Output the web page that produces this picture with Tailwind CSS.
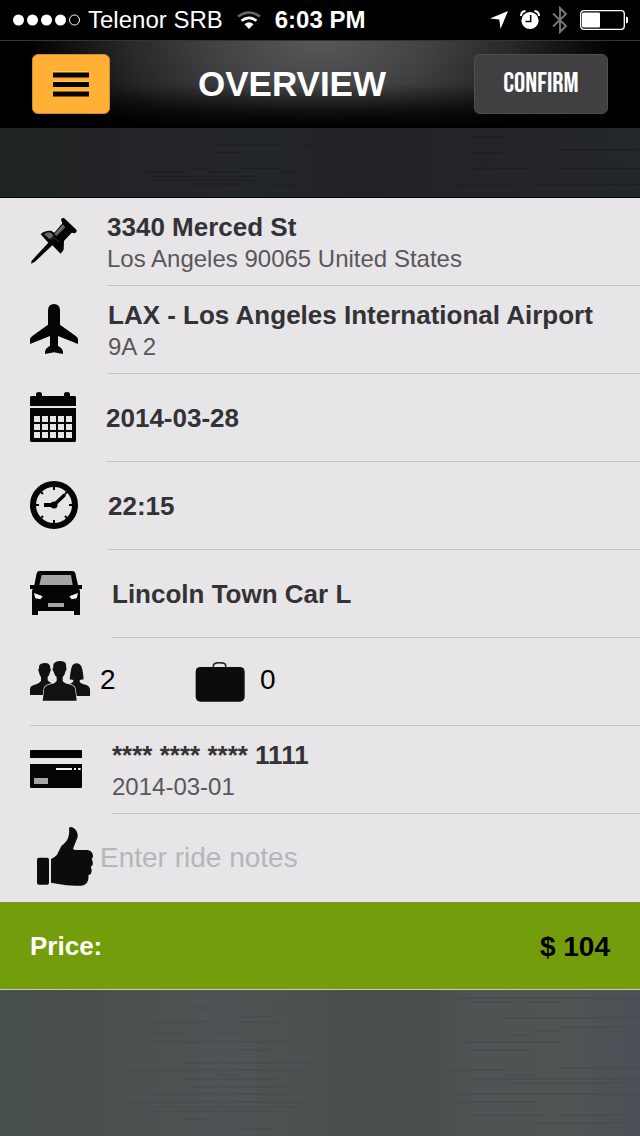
<!DOCTYPE html>
<html lang="en">
<head>
<meta charset="utf-8">
<meta name="viewport" content="width=device-width, initial-scale=1">
<title>Overview</title>
<script src="https://cdn.jsdelivr.net/npm/@tailwindcss/browser@4"></script>
</head>
<body class="min-h-screen flex flex-col bg-[linear-gradient(90deg,#465150_0%,#4a4d4e_8%,#4c5051_20%,#4e5455_35%,#4d5152_46%,#4a4d4e_56%,#4a4d4e_66%,#4e5354_74%,#4f5455_90%,#4d4f57_100%)] font-['Liberation_Sans',sans-serif] text-[#333235]">

<!-- Status bar -->
<div class="h-10 bg-black text-white flex items-center justify-between pl-3 pr-3 text-2xl">
  <div class="flex items-center">
    <svg class="w-[68px] h-3 mr-2" viewBox="0 0 68 12" fill="#fff"><circle cx="6.500" cy="6" r="5.500"/><circle cx="20.500" cy="6" r="5.500"/><circle cx="34.500" cy="6" r="5.500"/><circle cx="48.500" cy="6" r="5.500"/><circle cx="62.500" cy="6" r="5" fill="none" stroke="#fff"/></svg>
    <span>Telenor SRB</span>
    <svg class="w-6 h-[18px] mx-[14px]" viewBox="0 0 24 18" fill="none" stroke-width="2.600"><path d="M1 5.500Q12-2.500 23 5.500" stroke="#666"/><path d="M4.500 9.800Q12 4 19.500 9.800" stroke="#fff"/><path d="M12 18L7.500 13.200Q12 9.500 16.500 13.200Z" fill="#fff"/></svg>
    <span class="font-bold">6:03 PM</span>
  </div>
  <div class="flex items-center gap-3">
    <svg class="w-[18px] h-[18px]" viewBox="0 0 18 18" fill="#fff"><path d="M18 0L10.500 18 9.300 8.600 0 7.500Z"/></svg>
    <svg class="w-5 h-5" viewBox="0 0 20 20"><circle cx="10" cy="10.500" r="8.600" fill="#fff"/><path d="M1 6Q1 1.500 5.500 1M19 6Q19 1.500 14.500 1" fill="none" stroke="#fff" stroke-width="2"/><path d="M10.700 5V11.500H5.500" fill="none" stroke="#000" stroke-width="1.500"/></svg>
    <svg class="w-4 h-7" viewBox="0 0 16 28" fill="none" stroke="#77767a" stroke-width="1.900"><path d="M1 7.500L14 20 8 26V2L14 8 1 20.500"/></svg>
    <svg class="w-12 h-5" viewBox="0 0 48 20"><rect x=".7" y=".7" width="43.600" height="18.600" rx="3" fill="none" stroke="#fff" stroke-width="1.300"/><rect x="2" y="2.500" width="18" height="15" rx="1" fill="#fff"/><path d="M46 6.500Q48.500 7 48.500 10T46 13.500Z" fill="#fff"/></svg>
  </div>
</div>

<!-- Title bar -->
<header class="h-[88px] border-t border-[#343436] px-8 pb-0.5 flex items-center justify-between bg-black bg-[linear-gradient(180deg,transparent_50%,rgba(0,0,0,0.8)_85%,#000_100%),radial-gradient(ellipse_46%_170%_at_50%_0%,#58575a_0%,#434245_35%,#28272a_65%,#000_100%)]">
  <button type="button" aria-label="Menu" class="w-[78px] h-[60px] rounded-md bg-[#ffb035] border border-[#d08b2c] flex items-center justify-center">
    <svg class="w-9 h-7" viewBox="0 0 36 28"><path d="M0 2H36M0 12H36M0 21.500H36" stroke="#ffd04a" stroke-width="2"/><path d="M0 5H36M0 14.500H36M0 24H36" stroke="#0a0502" stroke-width="5"/></svg>
  </button>
  <h1 class="text-white font-bold text-[35px] leading-10">OVERVIEW</h1>
  <button type="button" class="w-[134px] h-[60px] rounded-md bg-[#403f42] border border-[#4e4d50] text-white text-[28px] font-['Bebas_Neue','Liberation_Sans_Narrow','Liberation_Sans',sans-serif]">CONFIRM</button>
</header>

<!-- Dark strip -->
<div class="h-[70px] border-b border-black bg-[linear-gradient(90deg,#1e2423_0%,#222326_15%,#232629_40%,#202225_57%,#222427_72%,#24272a_100%)]">
  <svg class="w-full h-full" viewBox="0 0 640 70" preserveAspectRatio="none" stroke="#1c1e21"><path d="M216 17H280M302 17H312M216 25H240M146 45H190M208 45H240M280 45H296M152 49H256M152 53H256M192 57H240M272 57H296M192 41H208M240 41H280M472 41H528M560 41H640M456 57H512M536 57H640M472 25H504M472 9H504M560 22H640"/></svg>
</div>

<!-- Ride details -->
<main class="bg-[#e7e5e8]">
  <div class="h-[88px] pl-[30px] flex gap-[30px] items-center">
    <svg class="w-[47px] h-12 mb-[3px] shrink-0" viewBox="90 52 141 144"><path d="M183 60Q184 54 192 55L230 91Q231 98 224 101L215 99 192 124 191 150 182 162 157 137 104 187 93 192 95 183 145 129 122 104Q132 92 153 93L163 99 187 71Z" fill="#050405"/><path d="M132 103Q143 95 153 99L161 108 149 119ZM188 74L196 83 169 109 163 103Z" fill="#69686b"/><path d="M153 121L160 114 179 127" fill="none" stroke="#555" stroke-width="2"/></svg>
    <div class="flex-1 h-full border-b border-[#c5c3c7] flex flex-col justify-center pt-[3px]">
      <div class="text-[26px] leading-[31px] font-bold">3340 Merced St</div>
      <div class="text-2xl leading-[31px] text-[#58575a]">Los Angeles 90065 United States</div>
    </div>
  </div>

  <div class="h-[88px] pl-[30px] flex gap-[30px] items-center">
    <svg class="w-12 h-[50px] mb-[3px] shrink-0" viewBox="90 312 144 150" fill="#050405"><path d="M144 330Q145 312 162 312T180 330V374L226 407Q234 412 234 418V432L174 408V437Q188 445 189 455V462L162 457 135 462V455Q136 445 150 437V408L90 432V418Q90 412 98 407L144 374Z"/></svg>
    <div class="flex-1 h-full border-b border-[#c5c3c7] flex flex-col justify-center pt-[3px]">
      <div class="text-[26px] leading-[31px] font-bold">LAX - Los Angeles International Airport</div>
      <div class="text-2xl leading-[31px] text-[#58575a]">9A 2</div>
    </div>
  </div>

  <div class="h-[88px] pl-[30px] flex gap-[30px] items-center">
    <svg class="w-[46px] h-[50px] mb-[3px] shrink-0" viewBox="0 0 46 50" fill="#050405"><path d="M1 4H6V2Q6 0 9 0T12 2V4H34V2Q34 0 37 0T40 2V4H45L46 5V14H0V5Z"/><path fill-rule="evenodd" d="M0 16H46V49L45 50H1L0 49ZM4 24V30H10V24ZM12 24V30H18V24ZM20 24V30H26V24ZM28 24V30H34V24ZM36 24V30H42V24ZM4 32V38H10V32ZM12 32V38H18V32ZM20 32V38H26V32ZM28 32V38H34V32ZM36 32V38H42V32ZM4 40V46H10V40ZM12 40V46H18V40ZM20 40V46H26V40ZM28 40V46H34V40ZM36 40V46H42V40Z"/></svg>
    <div class="flex-1 h-full border-b border-[#c5c3c7] flex items-center pt-0.5 text-[26px] font-bold">2014-03-28</div>
  </div>

  <div class="h-[88px] pl-[30px] flex gap-[30px] items-center">
    <svg class="w-12 h-12 mb-[3px] shrink-0" viewBox="0 0 48 48" fill="none" stroke="#050405"><circle cx="24" cy="24" r="21" stroke-width="6"/><path d="M24 6V9M24 39V42M6 24H9M39 24H42M11.300 11.300L13 13M35 13L36.700 11.300M11.300 36.700L13 35M35 35L36.700 36.700" stroke-width="2"/><path d="M14 24H24" stroke-width="4"/><path d="M24 24L34 14.500" stroke-width="3.500" stroke-linecap="round"/><circle cx="24" cy="24" r="3.500" fill="#050405" stroke="none"/></svg>
    <div class="flex-1 h-full border-b border-[#c5c3c7] flex items-center pt-0.5 text-[26px] font-bold">22:15</div>
  </div>

  <div class="h-[88px] pl-[30px] flex gap-[30px] items-center">
    <svg class="w-[52px] h-11 mb-[3px] shrink-0" viewBox="90 90 156 132"><path d="M119 90H217Q224 90 226 97L234 132H246V144H238L240 151V222H222V210H114V222H96V151L98 144H90V132H103L110 97Q112 90 119 90Z" fill="#050405"/><path d="M125 102H213L218 132H118Z" fill="#a5a4a7"/><path d="M102 156L128 166 121 175 106 172ZM234 156L208 166 215 175 230 172Z" fill="#f6f5f7"/><path d="M144 186H192V198H144Z" fill="#a5a4a7"/></svg>
    <div class="flex-1 h-full border-b border-[#c5c3c7] flex items-center pt-0.5 text-[26px] font-bold">Lincoln Town Car L</div>
  </div>

  <div class="h-[88px] pl-[30px]">
    <div class="h-full border-b border-[#c5c3c7] flex items-center text-[28px] text-black">
      <div class="w-[165px] flex items-center gap-[10px]">
        <svg class="w-[60px] h-10 mb-0.5" viewBox="90 363 180 120" fill="#111013"><path d="M117 385Q115 370 133 369T151 385Q155 389 150 397 148 407 143 411V421Q147 427 158 431L174 438V465H90V447Q91 437 104 434 119 429 123 422V411Q118 405 117 397 112 390 117 385Z"/><path d="M209 418Q213 374 221 373 229 367 239 373 248 378 251 418L239 420V425Q242 431 257 434 269 438 270 448V468H200V435Q217 430 220 424V420Z"/><path d="M160 382Q157 364 179 363T198 382Q202 386 196 395 194 407 188 411V422Q190 428 204 432 223 436 225 445L230 482H128L133 445Q137 435 155 432 168 428 170 422V411Q163 405 161 395 155 388 160 382Z" stroke="#e7e5e8" stroke-width="4" paint-order="stroke"/></svg>
        <span class="pb-1">2</span>
      </div>
      <div class="flex items-center gap-[15px]">
        <svg class="w-[50px] h-10" viewBox="586 366 148 120"><rect x="587" y="381" width="147" height="104" rx="14" fill="#0c0b0e"/><path d="M640 383V376Q642 368 659 368T677 376V383" fill="none" stroke="#2a292c" stroke-width="5"/></svg>
        <span class="pb-1">0</span>
      </div>
    </div>
  </div>

  <div class="h-[88px] pl-[30px] flex gap-[30px] items-center">
    <svg class="w-[52px] h-[38px] mb-[3px] shrink-0" viewBox="90 90 156 114"><path d="M92 90H244L246 92V114H90V92ZM90 132H246V202L244 204H92L90 202Z" fill="#050405"/><path d="M168 144H216V150H168ZM222 144H228V150H222ZM234 144H242V150H234Z" fill="#f0eef1"/><path d="M102 174H144V192H102Z" fill="#a5a4a7"/></svg>
    <div class="flex-1 h-full border-b border-[#c5c3c7] flex flex-col justify-center pt-[3px]">
      <div class="text-[26px] leading-[31px] font-bold">**** **** **** 1111</div>
      <div class="text-2xl leading-[31px] text-[#58575a]">2014-03-01</div>
    </div>
  </div>

  <div class="h-[88px] pl-[37px] flex gap-[7px] items-center">
    <label for="notes" aria-label="Ride notes" class="shrink-0 mb-[3px]">
      <svg class="w-14 h-[59px]" viewBox="111 322 168 177" fill="#0c0b0e"><rect x="111" y="414" width="36" height="81" rx="6"/><path d="M153 418Q165 413 171 405L184 379Q203 364 205 352 209 340 207 325 211 319 221 325 234 334 233 352L219 387Q221 392 233 391H263Q278 394 279 409 279 413 275 418 280 427 278 436L272 442Q278 453 272 463L265 467Q267 478 261 489 255 497 243 498 205 500 175 493L153 489Z"/></svg>
    </label>
    <input id="notes" type="text" placeholder="Enter ride notes" class="flex-1 min-w-0 h-full bg-transparent text-[28px] placeholder:text-[#b6b5b9] outline-none">
  </div>
</main>

<!-- Price bar -->
<div class="h-[88px] px-[30px] pt-0.5 bg-[#739d0b] border-b border-[#c9cfae] flex items-center justify-between font-bold">
  <span class="text-[26px] text-white">Price:</span>
  <span class="text-[28px] text-black">$ 104</span>
</div>

<!-- Brushed metal -->
<div class="flex-1">
  <svg class="w-full h-[146px]" viewBox="0 0 640 146" preserveAspectRatio="none" stroke="#474b4c"><path d="M192 18H216M272 18H296M240 27H272M152 32H208M240 32H280M152 44H184M216 44H240M152 52H288M240 60H272M184 73H312M128 80H304M216 85H240M184 89H280M192 97H288M152 104H288M128 112H304M152 117H296M152 121H288M184 129H208M240 139H272"/><path d="M456 8H640M472 12H512M528 12H560M504 28H640M560 37H640M536 41H560M512 45H528M464 52H560M472 60H528M448 80H504M560 78H640M504 85H536M472 89H640M512 93H640M456 104H640M456 112H536M472 125H544M560 125H640M536 133H640"/></svg>
</div>
</body>
</html>
